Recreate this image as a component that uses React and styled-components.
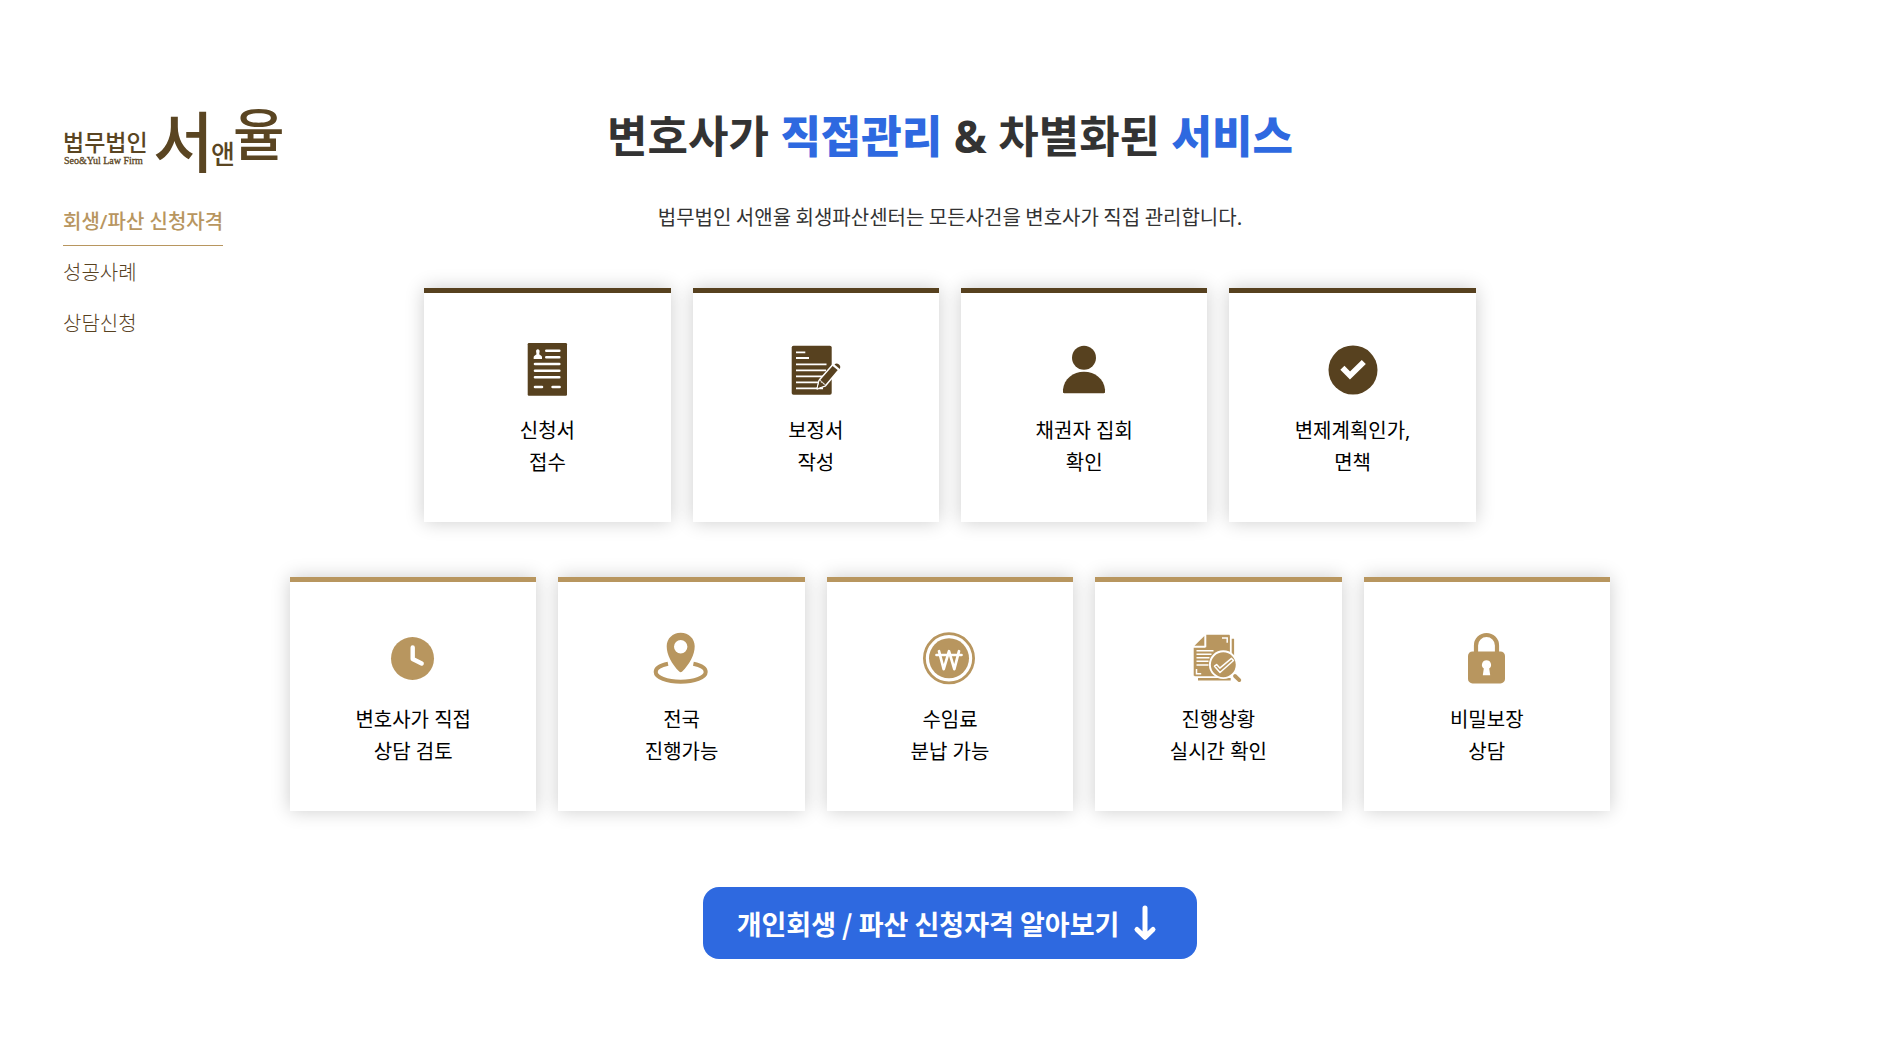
import React from "react";
import styled, { createGlobalStyle } from "styled-components";

const GlobalStyle = createGlobalStyle`
  * {
    box-sizing: border-box;
  }
  body {
    margin: 0;
    background: #fff;
    color: #000;
    font-family: "Noto Sans", "Noto Sans CJK KR", sans-serif;
    font-size: 20px;
  }
`;

const BROWN = "#57411f";
const GOLD = "#b8965f";
const BLUE = "#2e69e0";

const Page = styled.div`
  display: grid;
  grid-template-columns: minmax(290px, 1fr) minmax(0, 1320px) minmax(0, 1fr);
  padding-bottom: 104px;
`;

const Sidebar = styled.aside`
  padding: 87px 0 0 63px;
`;

const LogoLink = styled.a`
  display: block;
  width: 224px;
  height: 100px;
  svg {
    display: block;
  }
`;

const Menu = styled.nav`
  display: flex;
  flex-direction: column;
  align-items: flex-start;
  margin-top: 8px;
`;

const MenuLink = styled.a`
  padding: 12px 0 8px;
  border-bottom: 1px solid ${({ $active }) => ($active ? GOLD : "transparent")};
  color: ${({ $active }) => ($active ? GOLD : BROWN)};
  font-weight: ${({ $active }) => ($active ? 500 : 300)};
  line-height: 30px;
  text-decoration: none;
`;

const Main = styled.main`
  display: flex;
  flex-direction: column;
  align-items: center;
  padding-top: 104px;
`;

const Title = styled.h2`
  margin: 0;
  color: #333;
  font-size: 44px;
  font-weight: 700;
  line-height: 64px;
  text-align: center;
  em {
    color: ${BLUE};
    font-style: normal;
    font-weight: 900;
  }
`;

const Lead = styled.p`
  margin: 33px 0 55px;
  color: #333;
  font-family: "Noto Sans CJK KR", sans-serif;
  line-height: 32px;
  text-align: center;
`;

const CardRow = styled.ul`
  display: flex;
  justify-content: center;
  gap: 22px;
  width: 100%;
  margin: 0 0 55px;
  padding: 0;
  list-style: none;
`;

const CardBox = styled.li`
  display: flex;
  flex-direction: column;
  align-items: center;
  flex: 0 0 calc((100% - 88px) / 5);
  padding: 45px 0 43px;
  border-top: 5px solid ${({ $color }) => $color};
  background: #fff;
  box-shadow: 0 0 18px rgba(0, 0, 0, 0.2);
  color: ${({ $color }) => $color};
`;

const CardText = styled.p`
  margin: 13px 0 0;
  color: #000;
  line-height: 32px;
  text-align: center;
  white-space: pre-line;
`;

const MoreButton = styled.button`
  display: flex;
  align-items: center;
  gap: 8px;
  height: 72px;
  margin-top: 21px;
  padding: 0 34px;
  border: none;
  border-radius: 16px;
  background: ${BLUE};
  color: #fff;
  font-family: "Noto Sans CJK KR", sans-serif;
  font-size: 27px;
  font-weight: 700;
  cursor: pointer;
`;

const Logo = () => (
  <svg
    width="224"
    height="100"
    viewBox="0 -16 224 100"
    fill="#5a4522"
    fontFamily="'Noto Sans CJK KR', sans-serif"
    role="img"
    aria-label="법무법인 서앤율"
  >
    <text x="0" y="48" fontSize="23" fontWeight="500">법무법인</text>
    <text x="1" y="61" fontSize="10" stroke="#5a4522" strokeWidth="0.3" fontFamily="Liberation Serif, serif">Seo&amp;Yul Law Firm</text>
    <text x="90" y="64" fontSize="66" fontWeight="500">서</text>
    <text x="148" y="61" fontSize="26" fontWeight="500">앤</text>
    <text x="170" y="52" fontSize="56" fontWeight="500">율</text>
  </svg>
);

const IconBase = ({ children }) => (
  <svg width="64" height="64" viewBox="0 0 64 64" fill="currentColor" strokeLinecap="round" strokeLinejoin="round" aria-hidden="true">
    {children}
  </svg>
);

const FormIcon = () => (
  <IconBase>
    <rect x="12.7" y="5" width="39.3" height="52.7" rx="1.2" />
    <path d="M22.8 11.2c1.3 0 2 1 1.8 2.4l-.4 2.6 2.3 1.8c.6.6.6 1.8.5 3h-8.3c-.1-1.2-.1-2.4.5-3l2.3-1.8-.4-2.6c-.2-1.4.5-2.4 1.7-2.4z" fill="#fff" />
    <path d="M31.3 12.7h13M31.3 19.3h13M20 26h24.3M20 32.7h24.3M20 39.3h24.3M20 49h7M37.6 49h7" stroke="#fff" strokeWidth="2.6" />
  </IconBase>
);

const WriteIcon = () => (
  <IconBase>
    <rect x="7.7" y="7.7" width="40" height="49" rx="1.8" />
    <path d="M12 14.3h9.3M12 20h13M12 26.3h30.5M12 32.3h30M12 38.3h27M12 44.3h25M12 50.3h27" stroke="#fff" strokeWidth="1.8" strokeLinecap="butt" />
    <path d="M33.2 50.8l2.3-9L48.5 27l6.2 5-13.2 15.8z" stroke="#fff" strokeWidth="1.5" />
    <path d="M35.5 42c1.5.2 1.9.8 1.7 2.2 1.6-.2 2.3.3 2.1 1.7 1.3-.2 2 .4 2.2 1.9l-8.3 3z" stroke="#fff" strokeWidth="1" />
    <path d="M50.5 26.6c1-1.3 2.7-1.5 4.2-.4 1.6 1.2 2 2.9 1.1 4.7z" />
  </IconBase>
);

const PersonIcon = () => (
  <IconBase>
    <circle cx="32" cy="19.7" r="12" />
    <path d="M11 51.5C12 41 21 33.7 32 33.7S52 41 53 51.5V54c0 .8-.4 1.2-1.2 1.2H12.2c-.8 0-1.2-.4-1.2-1.2z" />
  </IconBase>
);

const CheckIcon = () => (
  <IconBase>
    <circle cx="32" cy="32" r="24.5" />
    <path d="M21.4 29.8l7.6 7.7L42.8 24" fill="none" stroke="#fff" strokeWidth="5.8" strokeLinecap="butt" strokeLinejoin="miter" />
  </IconBase>
);

const ClockIcon = () => (
  <IconBase>
    <circle cx="31.5" cy="31.5" r="21.5" />
    <path d="M31.7 20.5V32l9 4.5" fill="none" stroke="#fff" strokeWidth="4.4" />
  </IconBase>
);

const PinIcon = () => (
  <IconBase>
    <path fillRule="evenodd" d="M30.7 5.7c8 0 14 5.8 14 13.6 0 8.7-5 17.7-12.5 25.3-1 1-2 1-3 0-7.5-7.6-12.5-16.6-12.5-25.3 0-7.8 6-13.6 14-13.6zm0 7.4a6.7 6.7 0 1 0 0 13.4 6.7 6.7 0 0 0 0-13.4z" />
    <path d="M18 36.7C10.5 38.2 5.7 41.2 5.7 45c0 5.4 11.2 9.7 25 9.7s25-4.3 25-9.7c0-3.8-4.8-6.8-12.3-8.3" fill="none" stroke="currentColor" strokeWidth="4" strokeLinecap="butt" />
  </IconBase>
);

const WonIcon = () => (
  <IconBase>
    <circle cx="31" cy="31.3" r="24.6" fill="none" stroke="currentColor" strokeWidth="2.8" />
    <circle cx="31" cy="31.3" r="20" />
    <path d="M21 24.2l4.7 18L31 24.2l5.3 18 4.7-18M18.5 28h25" fill="none" stroke="#fff" strokeWidth="2.7" />
  </IconBase>
);

const ReviewIcon = () => (
  <IconBase>
    <path d="M20.3 7.7h22.4c.8 0 1.2.4 1.2 1.2v40.3H8.9c-.8 0-1.2-.4-1.2-1.2V20.7h11.4c.8 0 1.2-.4 1.2-1.2z" />
    <path d="M8.5 18.7L18.3 8.9v9.8z" />
    <path d="M45.7 11.7h2.4v17h-2.4zM12 51h32.7v2.6H12z" />
    <path d="M10.5 23.7h17M10.5 27.3h15M10.5 30.7h13M10.5 34.3h12M10.5 38h12M36 10.9h5.2v4.8M10.5 42v4.7h4.7" fill="none" stroke="#fff" strokeWidth="1.5" strokeLinecap="butt" strokeLinejoin="miter" />
    <circle cx="37.3" cy="37.7" r="13.4" stroke="#fff" strokeWidth="1.9" />
    <path d="M28.5 39.2l2.1-1.6 3.2 3.5 11.7-9.7 2 2.1-13.5 12z" fill="none" stroke="#fff" strokeWidth="1.5" />
    <path d="M49 49l4.3 4.1" fill="none" stroke="currentColor" strokeWidth="3.8" />
  </IconBase>
);

const LockIcon = () => (
  <IconBase>
    <path d="M21 26v-7.5a10.5 10.5 0 0 1 21 0V26" fill="none" stroke="currentColor" strokeWidth="4.2" />
    <rect x="13" y="24.4" width="37" height="32" rx="4.5" />
    <path d="M31.5 33.3a4.6 4.6 0 0 1 2.7 8.3l1 6.6h-7.4l1-6.6a4.6 4.6 0 0 1 2.7-8.3z" fill="#fff" />
  </IconBase>
);

const ArrowIcon = () => (
  <svg width="36" height="36" viewBox="0 0 36 36" fill="none" stroke="#fff" strokeWidth="5" strokeLinecap="round" strokeLinejoin="round" aria-hidden="true">
    <path d="M18 3v29M10 24.5l8 7.8 8-7.8" />
  </svg>
);

const menu = ["회생/파산 신청자격", "성공사례", "상담신청"];

const steps = [
  { icon: FormIcon, text: "신청서\n접수" },
  { icon: WriteIcon, text: "보정서\n작성" },
  { icon: PersonIcon, text: "채권자 집회\n확인" },
  { icon: CheckIcon, text: "변제계획인가,\n면책" },
];

const services = [
  { icon: ClockIcon, text: "변호사가 직접\n상담 검토" },
  { icon: PinIcon, text: "전국\n진행가능" },
  { icon: WonIcon, text: "수임료\n분납 가능" },
  { icon: ReviewIcon, text: "진행상황\n실시간 확인" },
  { icon: LockIcon, text: "비밀보장\n상담" },
];

const Cards = ({ items, color }) => (
  <CardRow>
    {items.map(({ icon: Icon, text }) => (
      <CardBox key={text} $color={color}>
        <Icon />
        <CardText>{text}</CardText>
      </CardBox>
    ))}
  </CardRow>
);

function App() {
  return (
    <>
      <GlobalStyle />
      <Page>
        <Sidebar>
          <LogoLink href="#">
            <Logo />
          </LogoLink>
          <Menu>
            {menu.map((label, i) => (
              <MenuLink key={label} href="#" $active={i === 0}>
                {label}
              </MenuLink>
            ))}
          </Menu>
        </Sidebar>
        <Main>
          <Title>
            변호사가 <em>직접관리</em> &amp; 차별화된 <em>서비스</em>
          </Title>
          <Lead>법무법인 서앤율 회생파산센터는 모든사건을 변호사가 직접 관리합니다.</Lead>
          <Cards items={steps} color={BROWN} />
          <Cards items={services} color={GOLD} />
          <MoreButton type="button">
            개인회생 / 파산 신청자격 알아보기
            <ArrowIcon />
          </MoreButton>
        </Main>
      </Page>
    </>
  );
}

export default App;
